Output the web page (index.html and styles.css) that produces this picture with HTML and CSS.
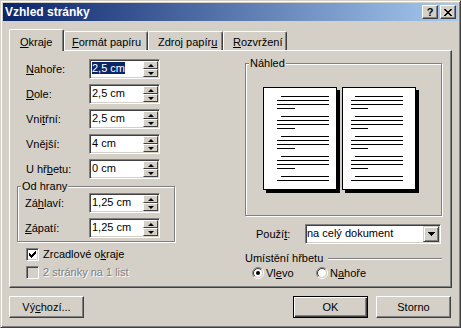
FILE: index.html
```html
<!DOCTYPE html>
<html lang="cs">

<head>
    <meta charset="UTF-8" />
    <title>Vzhled stránky</title>
    <link rel="stylesheet" href="styles.css">
</head>

<body>
    <div class="window">
        <div class="titlebar">
            <span class="title">Vzhled stránky</span>
            <div class="caption-buttons">
                <span class="cap-btn help">?</span>
                <span class="cap-btn">
                    <svg width="8" height="7" viewBox="0 0 8 7" shape-rendering="crispEdges">
                        <rect x="0" y="0" width="2" height="1" /><rect x="6" y="0" width="2" height="1" />
                        <rect x="1" y="1" width="2" height="1" /><rect x="5" y="1" width="2" height="1" />
                        <rect x="2" y="2" width="4" height="1" />
                        <rect x="3" y="3" width="2" height="1" />
                        <rect x="2" y="4" width="4" height="1" />
                        <rect x="1" y="5" width="2" height="1" /><rect x="5" y="5" width="2" height="1" />
                        <rect x="0" y="6" width="2" height="1" /><rect x="6" y="6" width="2" height="1" />
                    </svg>
                </span>
            </div>
        </div>

        <div class="tabs">
            <span class="tab tab-okraje active"><u>O</u>kraje</span>
            <span class="tab tab-format"><u>F</u>ormát papíru</span>
            <span class="tab tab-zdroj">Zdroj papír<u>u</u></span>
            <span class="tab tab-rozvrzeni"><u>R</u>ozvržení</span>
        </div>

        <div class="panel">
            <div class="col-left">
                <div class="field">
                    <label><u>N</u>ahoře:</label>
                    <div class="spin">
                        <span class="spin-value"><span class="selected">2,5 cm</span></span>
                        <span class="spin-buttons"><span class="spin-up"></span><span class="spin-down"></span></span>
                    </div>
                </div>
                <div class="field">
                    <label><u>D</u>ole:</label>
                    <div class="spin">
                        <span class="spin-value">2,5 cm</span>
                        <span class="spin-buttons"><span class="spin-up"></span><span class="spin-down"></span></span>
                    </div>
                </div>
                <div class="field">
                    <label>Vni<u>t</u>řní:</label>
                    <div class="spin">
                        <span class="spin-value">2,5 cm</span>
                        <span class="spin-buttons"><span class="spin-up"></span><span class="spin-down"></span></span>
                    </div>
                </div>
                <div class="field">
                    <label>Vně<u>j</u>ší:</label>
                    <div class="spin">
                        <span class="spin-value">4 cm</span>
                        <span class="spin-buttons"><span class="spin-up"></span><span class="spin-down"></span></span>
                    </div>
                </div>
                <div class="field">
                    <label>U hř<u>b</u>etu:</label>
                    <div class="spin">
                        <span class="spin-value">0 cm</span>
                        <span class="spin-buttons"><span class="spin-up"></span><span class="spin-down"></span></span>
                    </div>
                </div>

                <div class="group group-edges">
                    <div class="group-title">Od hrany</div>
                    <div class="field">
                        <label>Zá<u>h</u>laví:</label>
                        <div class="spin">
                            <span class="spin-value">1,25 cm</span>
                            <span class="spin-buttons"><span class="spin-up"></span><span class="spin-down"></span></span>
                        </div>
                    </div>
                    <div class="field">
                        <label><u>Z</u>ápatí:</label>
                        <div class="spin">
                            <span class="spin-value">1,25 cm</span>
                            <span class="spin-buttons"><span class="spin-up"></span><span class="spin-down"></span></span>
                        </div>
                    </div>
                </div>

                <div class="checks">
                    <div class="check">
                        <span class="checkbox">
                            <svg width="7" height="7" viewBox="0 0 7 7" shape-rendering="crispEdges">
                                <rect x="6" y="0" width="1" height="1" />
                                <rect x="5" y="1" width="2" height="1" />
                                <rect x="0" y="2" width="1" height="1" /><rect x="4" y="2" width="3" height="1" />
                                <rect x="0" y="3" width="2" height="1" /><rect x="3" y="3" width="3" height="1" />
                                <rect x="0" y="4" width="5" height="1" />
                                <rect x="1" y="5" width="3" height="1" />
                                <rect x="2" y="6" width="1" height="1" />
                            </svg>
                        </span>
                        <span>Zrcadlové o<u>k</u>raje</span>
                    </div>
                    <div class="check disabled">
                        <span class="checkbox"></span>
                        <span>2 stránky na 1 list</span>
                    </div>
                </div>
            </div>

            <div class="col-right">
                <div class="group group-preview">
                    <div class="group-title">Náhled</div>
                    <div class="pages">
                        <div class="page">
                            <svg width="72" height="101" viewBox="0 0 72 101" shape-rendering="crispEdges">
                                <g fill="#000">
                                    <rect x="17" y="8" width="48" height="1" /><rect x="13" y="12" width="52" height="1" /><rect x="13" y="16" width="52" height="1" /><rect x="13" y="20" width="18" height="1" />
                                    <rect x="17" y="28" width="48" height="1" /><rect x="13" y="32" width="52" height="1" /><rect x="13" y="36" width="52" height="1" /><rect x="13" y="40" width="18" height="1" />
                                    <rect x="17" y="48" width="48" height="1" /><rect x="13" y="52" width="52" height="1" /><rect x="13" y="56" width="52" height="1" /><rect x="13" y="60" width="18" height="1" />
                                    <rect x="17" y="68" width="48" height="1" /><rect x="13" y="72" width="52" height="1" /><rect x="13" y="76" width="52" height="1" /><rect x="13" y="80" width="18" height="1" />
                                    <rect x="17" y="88" width="48" height="1" /><rect x="13" y="92" width="52" height="1" />
                                </g>
                            </svg>
                        </div>
                        <div class="page">
                            <svg width="72" height="101" viewBox="0 0 72 101" shape-rendering="crispEdges">
                                <g fill="#000">
                                    <rect x="12" y="8" width="48" height="1" /><rect x="8" y="12" width="52" height="1" /><rect x="8" y="16" width="52" height="1" /><rect x="8" y="20" width="17" height="1" />
                                    <rect x="12" y="28" width="48" height="1" /><rect x="8" y="32" width="52" height="1" /><rect x="8" y="36" width="52" height="1" /><rect x="8" y="40" width="17" height="1" />
                                    <rect x="12" y="48" width="48" height="1" /><rect x="8" y="52" width="52" height="1" /><rect x="8" y="56" width="52" height="1" /><rect x="8" y="60" width="17" height="1" />
                                    <rect x="12" y="68" width="48" height="1" /><rect x="8" y="72" width="52" height="1" /><rect x="8" y="76" width="52" height="1" /><rect x="8" y="80" width="17" height="1" />
                                    <rect x="12" y="88" width="48" height="1" /><rect x="8" y="92" width="52" height="1" />
                                </g>
                            </svg>
                        </div>
                    </div>
                </div>

                <div class="apply-row">
                    <label>Použí<u>t</u>:</label>
                    <div class="select">
                        <span class="select-value">na celý dokument</span>
                        <span class="select-button">
                            <svg width="7" height="4" viewBox="0 0 7 4" shape-rendering="crispEdges">
                                <rect x="0" y="0" width="7" height="1" />
                                <rect x="1" y="1" width="5" height="1" />
                                <rect x="2" y="2" width="3" height="1" />
                                <rect x="3" y="3" width="1" height="1" />
                            </svg>
                        </span>
                    </div>
                </div>

                <div class="section-row">
                    <span>Umístění hřbetu</span>
                    <span class="section-line"></span>
                </div>

                <div class="radios">
                    <div class="radio-option first">
                        <svg class="radio" width="12" height="12" viewBox="0 0 12 12">
                            <path d="M2.1 9.9A5.5 5.5 0 0 1 9.9 2.1" fill="none" stroke="#808080" />
                            <path d="M9.9 2.1A5.5 5.5 0 0 1 2.1 9.9" fill="none" stroke="#fff" />
                            <circle cx="6" cy="6" r="4" fill="#fff" />
                            <path d="M2.8 9.2A4.5 4.5 0 0 1 9.2 2.8" fill="none" stroke="#404040" />
                            <path d="M9.2 2.8A4.5 4.5 0 0 1 2.8 9.2" fill="none" stroke="#d4d0c8" />
                            <circle cx="6" cy="6" r="2" fill="#000" />
                        </svg>
                        <span>Vl<u>e</u>vo</span>
                    </div>
                    <div class="radio-option">
                        <svg class="radio" width="12" height="12" viewBox="0 0 12 12">
                            <path d="M2.1 9.9A5.5 5.5 0 0 1 9.9 2.1" fill="none" stroke="#808080" />
                            <path d="M9.9 2.1A5.5 5.5 0 0 1 2.1 9.9" fill="none" stroke="#fff" />
                            <circle cx="6" cy="6" r="4" fill="#fff" />
                            <path d="M2.8 9.2A4.5 4.5 0 0 1 9.2 2.8" fill="none" stroke="#404040" />
                            <path d="M9.2 2.8A4.5 4.5 0 0 1 2.8 9.2" fill="none" stroke="#d4d0c8" />
                        </svg>
                        <span>N<u>a</u>hoře</span>
                    </div>
                </div>
            </div>
        </div>

        <div class="buttons">
            <span class="btn">Vý<u>c</u>hozí...</span>
            <div class="buttons-right">
                <span class="btn default">OK</span>
                <span class="btn">Storno</span>
            </div>
        </div>
    </div>
</body>

</html>
```

FILE: styles.css
```css
* {
    margin: 0;
    padding: 0;
    box-sizing: border-box;
}

body {
    background: #d4d0c8;
    color: #000;
    font-family: "Liberation Sans", Arial, sans-serif;
    font-size: 11px;
    line-height: 13px;
}

u {
    text-decoration: underline;
    text-underline-offset: 1px;
}

.window {
    width: 461px;
    height: 328px;
    padding: 2px;
    display: flex;
    flex-direction: column;
    background: #d4d0c8;
    border: 1px solid;
    border-color: #d4d0c8 #404040 #404040 #d4d0c8;
    box-shadow: inset 1px 1px #fff, inset -1px -1px #808080;
}

/* title bar */
.titlebar {
    height: 18px;
    padding: 0 2px;
    display: flex;
    align-items: center;
    justify-content: space-between;
    background: linear-gradient(to right, #0a246a, #a6caf0);
    color: #fff;
}

.title {
    font-weight: bold;
    font-size: 12px;
}

.caption-buttons {
    display: flex;
    gap: 2px;
}

.cap-btn {
    width: 16px;
    height: 14px;
    display: flex;
    align-items: center;
    justify-content: center;
    background: #d4d0c8;
    color: #000;
    border: 1px solid;
    border-color: #fff #404040 #404040 #fff;
    box-shadow: inset -1px -1px #808080;
}

.help {
    font-weight: bold;
    font-size: 11px;
}

/* tabs */
.tabs {
    margin-top: 8px;
    padding-left: 6px;
    height: 21px;
    display: flex;
    align-items: flex-end;
}

.tab {
    height: 19px;
    padding-top: 4px;
    white-space: nowrap;
    border-left: 1px solid #fff;
    border-top: 1px solid #fff;
    border-right: 1px solid #404040;
    border-radius: 2px 2px 0 0;
    box-shadow: inset -1px 0 #808080;
}

.tab.active {
    position: relative;
    z-index: 1;
    height: 22px;
    margin-bottom: -1px;
    padding-top: 6px;
    background: #d4d0c8;
}

.tab-okraje { width: 55px; padding-left: 10px; }
.tab-format { width: 84px; padding-left: 7px; }
.tab-zdroj { width: 75px; padding-left: 9px; }
.tab-rozvrzeni { width: 64px; padding-left: 9px; }

/* panel */
.panel {
    height: 238px;
    margin: 0 6px;
    padding: 8px 9px 0 7px;
    display: grid;
    grid-template-columns: 158px 197px;
    column-gap: 70px;
    align-items: start;
    border: 1px solid;
    border-color: #fff #404040 #404040 #fff;
    box-shadow: inset -1px -1px #808080;
}

.col-left,
.col-right {
    display: flex;
    flex-direction: column;
}

.col-left {
    gap: 5px;
}

.field {
    height: 20px;
    display: flex;
    align-items: center;
}

.field label {
    width: 72px;
    padding-left: 9px;
}

.spin {
    width: 71px;
    height: 20px;
    display: flex;
    background: #fff;
    border: 1px solid;
    border-color: #808080 #fff #fff #808080;
    box-shadow: inset 1px 1px #404040, inset -1px -1px #d4d0c8;
}

.spin-value {
    flex: 1;
    padding: 2px 0 0 2px;
    white-space: nowrap;
}

.selected {
    background: #0a246a;
    color: #fff;
}

.spin-buttons {
    width: 15px;
    margin: 1px 1px 1px 0;
    display: flex;
    flex-direction: column;
}

.spin-up,
.spin-down {
    height: 8px;
    display: flex;
    align-items: center;
    justify-content: center;
    background: #d4d0c8;
    border: 1px solid;
    border-color: #fff #404040 #404040 #fff;
}

.spin-up::after,
.spin-down::after {
    content: "";
    border-left: 3px solid transparent;
    border-right: 3px solid transparent;
}

.spin-up::after {
    border-bottom: 3px solid #000;
}

.spin-down::after {
    border-top: 3px solid #000;
}

/* group boxes */
.group {
    border: 1px solid #808080;
    box-shadow: inset 1px 1px #fff, 1px 1px #fff;
}

.group-title {
    width: fit-content;
    margin: -7px 0 0 3px;
    padding: 0 1px;
    background: #d4d0c8;
}

.group-edges {
    margin-top: 2px;
    padding-bottom: 3px;
}

.group-edges .field + .field {
    margin-top: 5px;
}

.group-edges .field label {
    width: 71px;
    padding-left: 7px;
}

/* checkboxes */
.checks {
    margin-top: 1px;
    padding-left: 9px;
    display: flex;
    flex-direction: column;
    gap: 5px;
}

.check {
    height: 13px;
    display: flex;
    align-items: center;
    gap: 4px;
}

.checkbox {
    width: 13px;
    height: 13px;
    display: flex;
    align-items: center;
    justify-content: center;
    background: #fff;
    border: 1px solid;
    border-color: #808080 #fff #fff #808080;
    box-shadow: inset 1px 1px #404040, inset -1px -1px #d4d0c8;
}

.check.disabled {
    color: #808080;
    text-shadow: 1px 1px #fff;
}

.check.disabled .checkbox {
    background: #d4d0c8;
}

/* preview */
.group-preview {
    margin-top: 4px;
    height: 153px;
}

.pages {
    margin-top: 17px;
    padding-left: 17px;
    display: flex;
    gap: 5px;
}

.page {
    width: 74px;
    height: 103px;
    background: #fff;
    border: 1px solid #000;
    box-shadow: 3px 3px 0 #000;
}

.page svg {
    display: block;
}

/* apply to */
.apply-row {
    margin-top: 8px;
    height: 20px;
    display: flex;
    align-items: center;
}

.apply-row label {
    width: 60px;
    padding-left: 11px;
}

.select {
    width: 136px;
    height: 20px;
    display: flex;
    background: #fff;
    border: 1px solid;
    border-color: #808080 #fff #fff #808080;
    box-shadow: inset 1px 1px #404040, inset -1px -1px #d4d0c8;
}

.select-value {
    flex: 1;
    padding: 2px 0 0 1px;
    white-space: nowrap;
}

.select-button {
    width: 16px;
    height: 16px;
    margin: 1px 1px 0 0;
    display: flex;
    align-items: center;
    justify-content: center;
    background: #d4d0c8;
    border: 1px solid;
    border-color: #d4d0c8 #404040 #404040 #d4d0c8;
    box-shadow: inset 1px 1px #fff, inset -1px -1px #808080;
}

.section-row {
    margin-top: 8px;
    height: 13px;
    display: flex;
    align-items: center;
}

.section-line {
    flex: 1;
    height: 2px;
    margin-left: 5px;
    border-top: 1px solid #808080;
    border-bottom: 1px solid #fff;
}

.radios {
    margin-top: 2px;
    padding-left: 7px;
    height: 12px;
    display: flex;
    align-items: center;
}

.radio-option {
    display: flex;
    align-items: center;
    gap: 2px;
}

.radio-option.first {
    width: 64px;
}

.radio {
    display: block;
}

/* dialog buttons */
.buttons {
    margin-top: 8px;
    padding: 0 7px 0 6px;
    display: flex;
    justify-content: space-between;
}

.buttons-right {
    display: flex;
    gap: 8px;
}

.btn {
    width: 75px;
    height: 22px;
    display: flex;
    align-items: center;
    justify-content: center;
    border: 1px solid;
    border-color: #fff #404040 #404040 #fff;
    box-shadow: inset -1px -1px #808080;
}

.btn.default {
    border-color: #000;
    box-shadow: inset 1px 1px #fff, inset -1px -1px #404040, inset -2px -2px #808080;
}
```
